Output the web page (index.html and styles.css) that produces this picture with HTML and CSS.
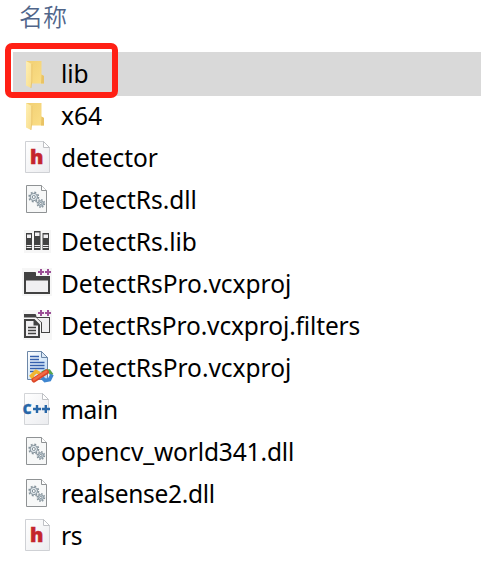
FILE: index.html
```
<!DOCTYPE html>
<html lang="zh-CN">
<head>
  <meta charset="utf-8">
  <title>名称</title>
  <link rel="stylesheet" href="styles.css">
</head>
<body>
  <!-- shared icons -->
  <svg class="sprite" width="0" height="0">
    <defs>
      <linearGradient id="gold" x1="0" y1="0" x2="1" y2="1">
        <stop offset="0" stop-color="#f1cf73"/>
        <stop offset="1" stop-color="#fbdf88"/>
      </linearGradient>
      <linearGradient id="flap" x1="0" y1="0" x2="1" y2="1">
        <stop offset="0" stop-color="#fff0b4"/>
        <stop offset="1" stop-color="#f8dc8a"/>
      </linearGradient>
      <linearGradient id="paper" x1="0" y1="0" x2="1" y2="1">
        <stop offset="0" stop-color="#ffffff"/>
        <stop offset="1" stop-color="#ebecef"/>
      </linearGradient>
      <linearGradient id="doc" x1="0" y1="0" x2="1" y2="1">
        <stop offset="0" stop-color="#ffffff"/>
        <stop offset="1" stop-color="#b9d8f5"/>
      </linearGradient>
      <symbol id="folder" viewBox="0 0 32 34">
        <path d="M4 4H19.500V17.500L22 19V26.500H9L4 25z" fill="url(#gold)"/>
        <path d="M19.500 17.500L22 19V26.500H19z" fill="#e9c365"/>
        <path d="M4 4L9.800 7V24L9 31L4 28.500z" fill="url(#flap)"/>
        <path d="M9.800 7V24L9 31" fill="none" stroke="#e5bd60" stroke-width=".7"/>
      </symbol>
      <symbol id="header" viewBox="0 0 32 34">
        <path d="M3.500 .5H21.500L27.500 6.500V31.500H3.500z" fill="url(#paper)" stroke="#cfd1d5"/>
        <path d="M21.500 .5V6.500H27.500z" fill="#fff" stroke="#bfc1c5"/>
        <text class="glyph-h" x="14.800" y="23" text-anchor="middle">h</text>
      </symbol>
      <symbol id="dll" viewBox="0 0 32 34">
        <path d="M4.500 2.500H19.500L24.500 7.500V29.500H4.500z" fill="#f7f8f8" stroke="#8f9294"/>
        <path d="M19.500 2.500V7.500H24.500" fill="#fff" stroke="#8f9294"/>
        <g fill="#e2e9ed" stroke="#84929b">
          <circle cx="11.800" cy="14" r="4.700" fill="none" stroke-width="1.600" stroke-dasharray="1.850 1.840"/>
          <circle cx="11.800" cy="14" r="3.700"/>
          <circle cx="11.800" cy="14" r="1.500" fill="#fff"/>
          <circle cx="18.800" cy="20.500" r="3.700" fill="none" stroke-width="1.400" stroke-dasharray="1.450 1.450"/>
          <circle cx="18.800" cy="20.500" r="2.800" fill="#c9d4db"/>
          <circle cx="18.800" cy="20.500" r="1.100" fill="#fff"/>
        </g>
      </symbol>
      <symbol id="vcx" viewBox="0 0 32 34">
        <path d="M0 1H30V29H0z" fill="#f6f6f6"/>
        <path d="M2 5H13.500L15 7.500H28V27H2z" fill="#424242"/>
        <path d="M4 13.500H26V25H4z" fill="#f0eff1"/>
        <path d="M4 7H11L12.500 9.500H4z" fill="#f0eff1"/>
        <path d="M14 1H30V9H14z" fill="#f6f6f6"/>
        <path d="M4 6.500H13V10H4z" fill="#424242"/>
        <path d="M19 2V8M16 5H22M26 2V8M23 5H29" stroke="#9b4f96" stroke-width="2"/>
      </symbol>
      <symbol id="filters" viewBox="0 0 32 34">
        <path d="M1 1H30V31H1z" fill="#f6f6f6"/>
        <path d="M2 5H13.500L15 7.500H28V24H19V13.500L14 8.500H2z" fill="#424242"/>
        <path d="M15 9H27V23H20V13.500z" fill="#f0eff1"/>
        <path d="M2 10H12.500L18 15.500V29H2z" fill="#424242"/>
        <path d="M4 12H11.500V16.500H16V27H4z" fill="#f0eff1"/>
        <path d="M6 18.500H14M6 21.500H14M6 24.500H14" stroke="#424242" stroke-width="1.400"/>
        <path d="M14.500 1H30V8H14.500z" fill="#f6f6f6"/>
        <path d="M19 1V7M16 4H22M26 1V7M23 4H29" stroke="#9b4f96" stroke-width="2"/>
      </symbol>
      <symbol id="lib" viewBox="0 0 32 34">
        <path d="M2 5H29V28H2z" fill="#f6f6f6"/>
        <path d="M4 8H10V25H4zM12 6H18.500V25H12zM20.500 8H27V25H20.500z" fill="#424242"/>
        <path d="M5 9.500H9V13H5zM13 7.500H17.500V11H13zM21.500 9.500H26V13H21.500z" fill="#f0eff1"/>
        <path d="M4.500 20.500H9.500M4.500 22.500H9.500M12.500 20.500H18M12.500 22.500H18M21 20.500H26.500M21 22.500H26.500" stroke="#f0eff1"/>
      </symbol>
      <symbol id="user" viewBox="0 0 32 34">
        <path d="M5.500 .5H19.500L25.500 6.500V28.500H5.500z" fill="url(#doc)" stroke="#6c87a8"/>
        <path d="M19.500 .5V6.500H25.500z" fill="#dce9f6" stroke="#6c87a8"/>
        <path d="M8 5.500H17M8 8.500H17M8 11.500H22.500M8 14.500H22.500M8 17.500H22.500M8 20.500H14" stroke="#3560ad" stroke-width="1.300"/>
        <path d="M20 22L24 20H27L30 24" fill="none" stroke="#58a44c" stroke-width="3.400"/>
        <path d="M30 23.500L27.500 28.500L23 29.500L20 26.500" fill="none" stroke="#3f86d0" stroke-width="3.800"/>
        <path d="M18 22.500L14 20.500L9.500 25L12.500 29" fill="none" stroke="#f2b630" stroke-width="3.600"/>
        <path d="M12 29L24.500 21" stroke="#dc4526" stroke-width="5" stroke-linecap="round"/>
        <path d="M12 28.500L24 20.800" stroke="#f36a43" stroke-width="2.500" stroke-linecap="round"/>
      </symbol>
      <symbol id="cpp" viewBox="0 0 32 34">
        <path d="M2.500 .5H20.500L26.500 6.500V31.500H2.500z" fill="url(#paper)" stroke="#d3d5d8"/>
        <path d="M20.500 .5V6.500H26.500z" fill="#fff" stroke="#bfc1c5"/>
        <text class="glyph-c" x=".8" y="20.700">C</text>
        <path d="M15 12V20M11 16H19M23.800 12V20M19.900 16H28" stroke="#2867a8" stroke-width="2.400"/>
      </symbol>
    </defs>
  </svg>

  <div class="explorer">
    <div class="column-title">名称</div>
    <ul class="files">
      <li class="file selected"><svg class="icon"><use href="#folder"/></svg><span class="name">lib</span><span class="mark"></span></li>
      <li class="file"><svg class="icon"><use href="#folder"/></svg><span class="name">x64</span></li>
      <li class="file"><svg class="icon"><use href="#header"/></svg><span class="name">detector</span></li>
      <li class="file"><svg class="icon"><use href="#dll"/></svg><span class="name">DetectRs.dll</span></li>
      <li class="file"><svg class="icon"><use href="#lib"/></svg><span class="name">DetectRs.lib</span></li>
      <li class="file"><svg class="icon"><use href="#vcx"/></svg><span class="name">DetectRsPro.vcxproj</span></li>
      <li class="file"><svg class="icon"><use href="#filters"/></svg><span class="name snug">DetectRsPro.vcxproj.filters</span></li>
      <li class="file"><svg class="icon"><use href="#user"/></svg><span class="name">DetectRsPro.vcxproj</span></li>
      <li class="file"><svg class="icon"><use href="#cpp"/></svg><span class="name tight">main</span></li>
      <li class="file"><svg class="icon"><use href="#dll"/></svg><span class="name snug">opencv_world341.dll</span></li>
      <li class="file"><svg class="icon"><use href="#dll"/></svg><span class="name tight">realsense2.dll</span></li>
      <li class="file"><svg class="icon"><use href="#header"/></svg><span class="name tight">rs</span></li>
    </ul>
  </div>
</body>
</html>
```

FILE: styles.css
```
body {
  margin: 0;
  background-color: #fff;
  font-family: "Noto Sans", "Noto Sans CJK SC", sans-serif;
  color: #000;
}

.sprite {
  display: block;
}

.explorer {
  height: 573px;
}

.column-title {
  height: 52px;
  padding-left: 19px;
  box-sizing: border-box;
  font-family: "Noto Sans CJK SC", sans-serif;
  font-size: 24px;
  font-weight: 350;
  line-height: 31px;
  color: #50658a;
}

.files {
  list-style: none;
  margin: 0;
  padding: 0 0 0 13px;
}

.file {
  display: flex;
  align-items: center;
  height: 42px;
  padding-left: 9px;
}

.file.selected {
  position: relative;
  height: 44px;
  margin-bottom: -1px;
  background-color: #d9d9d9;
}

.icon {
  width: 32px;
  height: 34px;
  margin-right: 7px;
}

.name {
  font-size: 24.5px;
  line-height: 42px;
  white-space: nowrap;
  letter-spacing: -0.03px;
}

.name.snug {
  letter-spacing: -0.14px;
}

.name.tight {
  letter-spacing: -0.3px;
}

/* red frame around the folder */
.mark {
  position: absolute;
  left: -8px;
  top: -9px;
  width: 101px;
  height: 43px;
  border: 6px solid #ff2015;
  border-radius: 7px;
}

.glyph-h {
  font-family: "Noto Sans", sans-serif;
  font-size: 20px;
  font-weight: 900;
  fill: #c4262c;
  stroke: #c4262c;
  stroke-width: 0.5px;
}

.glyph-c {
  font-family: "Noto Sans", sans-serif;
  font-size: 13.5px;
  font-weight: 900;
  fill: #2867a8;
  stroke: #2867a8;
  stroke-width: 0.4px;
}
```
